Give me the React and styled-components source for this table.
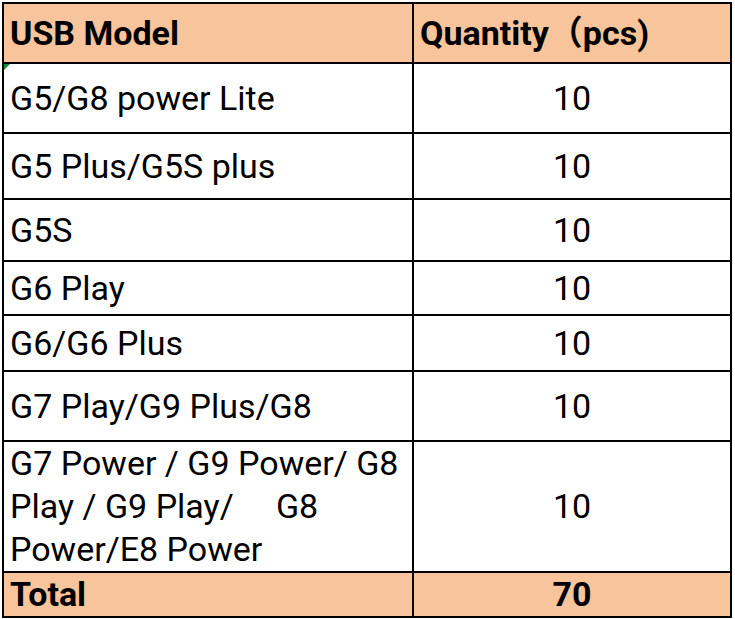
import React from "react";
import styled, { createGlobalStyle } from "styled-components";

const GlobalStyle = createGlobalStyle`
  html, body {
    margin: 0;
    padding: 0;
    background: #ffffff;
  }
  body {
    font-family: Roboto, "Noto Sans", "Noto Sans CJK SC", sans-serif;
    color: #000;
  }
`;

const rows = [
  { model: "G5/G8 power Lite", qty: 10, height: 70 },
  { model: "G5 Plus/G5S plus", qty: 10, height: 66 },
  { model: "G5S", qty: 10, height: 62 },
  { model: "G6 Play", qty: 10, height: 54 },
  { model: "G6/G6 Plus", qty: 10, height: 56 },
  { model: "G7 Play/G9 Plus/G8", qty: 10, height: 70 },
  {
    model: "G7 Power / G9 Power/ G8\nPlay / G9 Play/     G8\nPower/E8 Power",
    qty: 10,
    height: 128,
  },
];

const Page = styled.div`
  padding: 2px 0 0 2px;
`;

const Sheet = styled.table`
  border-collapse: collapse;
  table-layout: fixed;
  width: 728px;
  font-size: 34px;
`;

const Row = styled.tr`
  height: ${(p) => p.$h}px;
  background: ${(p) => (p.$accent ? "#f8c49b" : "#ffffff")};
`;

const Cell = styled.td`
  position: relative;
  border: 2px solid #000;
  padding: 0 6px;
  vertical-align: middle;
  text-align: ${(p) => (p.$center ? "center" : "left")};
  font-weight: ${(p) => (p.$bold ? 700 : 400)};
  line-height: 43px;
  white-space: pre;
  overflow: hidden;
`;

const HeadCell = styled(Cell).attrs({ as: "th" })`
  font-weight: 700;
  text-align: left;
`;

const Flag = styled.span`
  position: absolute;
  left: 0;
  top: 0;
  width: 0;
  height: 0;
  border-top: 6px solid #1e8a3c;
  border-right: 6px solid transparent;
`;

export default function App() {
  return (
    <Page>
      <GlobalStyle />
      <Sheet>
        <colgroup>
          <col style={{ width: 410 }} />
          <col style={{ width: 318 }} />
        </colgroup>
        <thead>
          <Row $h={60} $accent>
            <HeadCell>USB Model</HeadCell>
            <HeadCell>Quantity（pcs)</HeadCell>
          </Row>
        </thead>
        <tbody>
          {rows.map((r, i) => (
            <Row key={i} $h={r.height}>
              <Cell>
                {i === 0 && <Flag />}
                {r.model}
              </Cell>
              <Cell $center>{r.qty}</Cell>
            </Row>
          ))}
          <Row $h={44} $accent>
            <Cell $bold>Total</Cell>
            <Cell $bold $center>
              70
            </Cell>
          </Row>
        </tbody>
      </Sheet>
    </Page>
  );
}
